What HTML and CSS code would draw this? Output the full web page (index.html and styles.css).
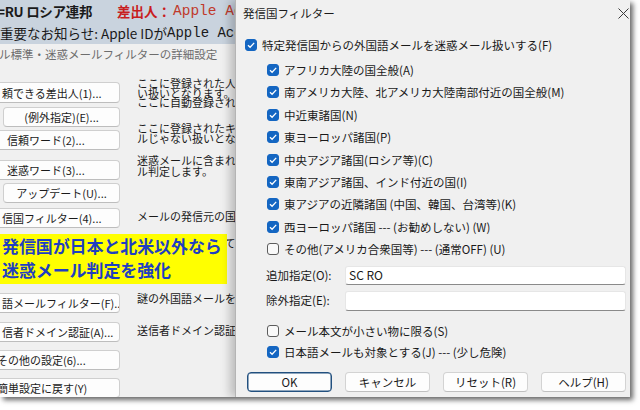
FILE: index.html
```html
<!DOCTYPE html>
<html lang="ja">
<head>
<meta charset="utf-8">
<title>発信国フィルター</title>
<link rel="stylesheet" href="styles.css">
</head>
<body>
<div class="frame">
  <div class="mainwin">
    <div class="hdr">
      <div class="hdr-row"><span class="hdr-country">=RU ロシア連邦</span><span class="hdr-from">差出人：</span><span class="mono">Apple Account</span></div>
      <div class="hdr-row hdr-row2"><span>重要なお知らせ: Apple IDが</span><span class="mono dark">Apple Account</span></div>
    </div>
    <div class="subtitle">ル標準・迷惑メールフィルターの詳細設定</div>
    <div class="settings">
      <div class="btncol">
        <button class="btn b1">頼できる差出人(1)...</button>
        <button class="btn sub b2">(例外指定)(E)...</button>
        <button class="btn pad b3">信頼ワード(2)...</button>
        <button class="btn pad b4">迷惑ワード(3)...</button>
        <button class="btn sub b5">アップデート(U)...</button>
        <button class="btn b6">信国フィルター(4)...</button>
        <button class="btn b7">語メールフィルター(F)...</button>
        <button class="btn b8">信者ドメイン認証(A)...</button>
        <button class="btn cut b9">その他の設定(6)...</button>
        <button class="btn cut b10">簡単設定に戻す(Y)</button>
      </div>
      <div class="desccol">
        <p class="desc d1">ここに登録された人からのメールは<br>い扱いとなります。ここに<br>ここに自動登録されます。</p>
        <p class="desc d2">ここに登録されたキーワードを含むメー<br>ルじゃない扱いとなります。</p>
        <p class="desc d3">迷惑メールに含まれるキーワードでメー<br>ル判定します。</p>
        <p class="desc d4">メールの発信元の国で判定します。</p>
        <p class="desc d5">発信国をもとにして判定します。</p>
        <p class="desc d6">謎の外国語メールを判定します。</p>
        <p class="desc d7">送信者ドメイン認証の結果で判定します。</p>
      </div>
    </div>
    <div class="callout">発信国が日本と北米以外なら<br>迷惑メール判定を強化</div>
  </div>

  <div class="dialog">
    <div class="titlebar">
      <span class="title">発信国フィルター</span>
      <svg class="close" width="11" height="11" viewBox="0 0 11 11"><path d="M0.5 0.5 L10.5 10.5 M10.5 0.5 L0.5 10.5" stroke="#3a3a3a" stroke-width="1" fill="none"/></svg>
    </div>
    <div class="dlg-body">
      <label class="chk main"><span class="box on"><svg width="12" height="12" viewBox="0 0 12 12"><path d="M3 6.3 L5.1 8.3 L9.2 3.9" stroke="#fff" stroke-width="1.3" fill="none"/></svg></span>特定発信国からの外国語メールを迷惑メール扱いする(F)</label>
      <div class="sublist">
        <label class="chk"><span class="box on"><svg width="12" height="12" viewBox="0 0 12 12"><path d="M3 6.3 L5.1 8.3 L9.2 3.9" stroke="#fff" stroke-width="1.3" fill="none"/></svg></span>アフリカ大陸の国全般(A)</label>
        <label class="chk"><span class="box on"><svg width="12" height="12" viewBox="0 0 12 12"><path d="M3 6.3 L5.1 8.3 L9.2 3.9" stroke="#fff" stroke-width="1.3" fill="none"/></svg></span>南アメリカ大陸、北アメリカ大陸南部付近の国全般(M)</label>
        <label class="chk"><span class="box on"><svg width="12" height="12" viewBox="0 0 12 12"><path d="M3 6.3 L5.1 8.3 L9.2 3.9" stroke="#fff" stroke-width="1.3" fill="none"/></svg></span>中近東諸国(N)</label>
        <label class="chk"><span class="box on"><svg width="12" height="12" viewBox="0 0 12 12"><path d="M3 6.3 L5.1 8.3 L9.2 3.9" stroke="#fff" stroke-width="1.3" fill="none"/></svg></span>東ヨーロッパ諸国(P)</label>
        <label class="chk"><span class="box on"><svg width="12" height="12" viewBox="0 0 12 12"><path d="M3 6.3 L5.1 8.3 L9.2 3.9" stroke="#fff" stroke-width="1.3" fill="none"/></svg></span>中央アジア諸国(ロシア等)(C)</label>
        <label class="chk"><span class="box on"><svg width="12" height="12" viewBox="0 0 12 12"><path d="M3 6.3 L5.1 8.3 L9.2 3.9" stroke="#fff" stroke-width="1.3" fill="none"/></svg></span>東南アジア諸国、インド付近の国(I)</label>
        <label class="chk"><span class="box on"><svg width="12" height="12" viewBox="0 0 12 12"><path d="M3 6.3 L5.1 8.3 L9.2 3.9" stroke="#fff" stroke-width="1.3" fill="none"/></svg></span>東アジアの近隣諸国 (中国、韓国、台湾等)(K)</label>
        <label class="chk"><span class="box on"><svg width="12" height="12" viewBox="0 0 12 12"><path d="M3 6.3 L5.1 8.3 L9.2 3.9" stroke="#fff" stroke-width="1.3" fill="none"/></svg></span>西ヨーロッパ諸国 --- (お勧めしない) (W)</label>
        <label class="chk"><span class="box"></span>その他(アメリカ合衆国等) --- (通常OFF) (U)</label>
      </div>
      <div class="fields">
        <span class="flabel">追加指定(O):</span><div class="field">SC RO</div>
        <span class="flabel">除外指定(E):</span><div class="field"></div>
      </div>
      <div class="opts">
        <label class="chk"><span class="box"></span>メール本文が小さい物に限る(S)</label>
        <label class="chk"><span class="box on"><svg width="12" height="12" viewBox="0 0 12 12"><path d="M3 6.3 L5.1 8.3 L9.2 3.9" stroke="#fff" stroke-width="1.3" fill="none"/></svg></span>日本語メールも対象とする(J) --- (少し危険)</label>
      </div>
      <div class="btnrow">
        <button class="dbtn default">OK</button>
        <button class="dbtn">キャンセル</button>
        <button class="dbtn">リセット(R)</button>
        <button class="dbtn">ヘルプ(H)</button>
      </div>
    </div>
  </div>
</div>
</body>
</html>
```

FILE: styles.css
```css
html, body {
  margin: 0;
  padding: 0;
  background: #ffffff;
}
body {
  font-family: "Noto Sans CJK JP", "Noto Sans", sans-serif;
  color: #1a1a1a;
  width: 640px;
  height: 410px;
  overflow: hidden;
}
.frame {
  width: 630px;
  height: 397px;
  display: flex;
  overflow: hidden;
  box-shadow: 3px 3px 5px rgba(0, 0, 0, 0.6);
}

/* ---------- background main window ---------- */
.mainwin {
  width: 235px;
  flex: none;
  position: relative;
  overflow: hidden;
  background: #f0f0f0;
}
.hdr {
  background: #c9d3de;
  height: 44px;
}
.hdr-row {
  height: 22px;
  line-height: 22px;
  display: flex;
  white-space: nowrap;
  font-size: 13.5px;
}
.hdr-country {
  font-weight: bold;
  width: 120px;
  margin-left: -3px;
  flex: none;
  letter-spacing: -0.3px;
}
.hdr-from {
  font-weight: bold;
  color: #c81e1e;
  width: 56px;
  flex: none;
}
.mono {
  font-family: "Liberation Mono", monospace;
  font-size: 14.5px;
  color: #c0392b;
}
.mono.dark {
  color: #1a1a1a;
  font-size: 14px;
}
.hdr-row2 {
  font-size: 13.5px;
}
.subtitle {
  height: 20px;
  line-height: 20px;
  font-size: 11.5px;
  color: #6d6d6d;
  white-space: nowrap;
  margin-left: -1px;
}
.settings {
  display: flex;
}
.btncol {
  width: 137px;
  flex: none;
  display: flex;
  flex-direction: column;
  align-items: flex-start;
}
.btn {
  font: inherit;
  font-size: 11px;
  color: #1a1a1a;
  height: 20px;
  line-height: 18px;
  padding: 0 0 0 9px;
  margin: 0 0 0 -8px;
  width: 128px;
  text-align: left;
  white-space: nowrap;
  overflow: hidden;
  background: #fdfdfd;
  border: 1px solid #cfcfcf;
  border-bottom-color: #bdbdbd;
  border-radius: 4px;
}
.btn.pad { padding-left: 14px; }
.btn.cut { padding-left: 4px; }
.btn.sub {
  margin-left: 3px;
  width: 117px;
  padding: 0;
  text-align: center;
}
.b1 { margin-top: 18px; height: 21px; }
.b2 { margin-top: 4px; }
.b3 { margin-top: 3px; }
.b4 { margin-top: 10px; }
.b5 { margin-top: 3px; }
.b6 { margin-top: 5px; }
.b7 { margin-top: 65px; }
.b8 { margin-top: 9px; }
.b9 { margin-top: 8px; }
.b10 { margin-top: 8px; }

.desccol {
  flex: 1;
  min-width: 0;
  white-space: nowrap;
  overflow: hidden;
}
.desc {
  margin: 0;
  font-size: 11px;
  line-height: 9.5px;
  color: #1a1a1a;
}
.d1 { margin-top: 15px; }
.d2 { margin-top: 16.5px; }
.d3 { margin-top: 12px; line-height: 11px; }
.d4 { margin-top: 34px; line-height: 11px; }
.d5 { margin-top: 16px; line-height: 11px; }
.d6 { margin-top: 44px; line-height: 11px; }
.d7 { margin-top: 21px; line-height: 11px; }

.callout {
  position: absolute;
  left: 0;
  top: 234px;
  width: 227px;
  height: 50px;
  background: #ffff00;
  color: #1f3fc0;
  font-weight: bold;
  font-size: 17px;
  line-height: 24px;
  white-space: nowrap;
  padding-left: 2px;
  box-sizing: border-box;
  letter-spacing: -0.1px;
}

/* ---------- dialog ---------- */
.dialog {
  flex: 1;
  position: relative;
  z-index: 1;
  background: #f0f0f0;
  border-left: 1px solid #b4b4b4;
  box-shadow: -5px 0 9px rgba(0, 0, 0, 0.22);
  display: flex;
  flex-direction: column;
  font-size: 11.5px;
}
.titlebar {
  height: 26px;
  display: flex;
  align-items: center;
  justify-content: space-between;
  padding: 0 2px 0 7px;
  flex: none;
}
.title {
  font-size: 11.5px;
  line-height: 26px;
}
.close {
  display: block;
  margin-top: 1px;
}
.dlg-body {
  padding: 0 5px 0 9px;
  display: flex;
  flex-direction: column;
}
.chk {
  display: flex;
  align-items: center;
  gap: 5px;
  white-space: nowrap;
  height: 22.4px;
}
.chk.main {
  margin-top: 9px;
  height: 20px;
}
.box {
  width: 12px;
  height: 12px;
  flex: none;
  box-sizing: border-box;
  border: 1px solid #5c5c5c;
  border-radius: 3px;
  background: #f9f9f9;
  display: flex;
}
.box.on {
  background: #1466c2;
  border-color: #1466c2;
}
.box svg {
  margin: -1px;
  display: block;
}
.sublist {
  margin-top: 3.8px;
  padding-left: 22px;
  display: flex;
  flex-direction: column;
}
.fields {
  margin-top: 5.6px;
  padding-left: 21px;
  display: grid;
  grid-template-columns: 79px 1fr;
  grid-template-rows: 19px 20px;
  row-gap: 6px;
  align-items: center;
}
.flabel {
  white-space: nowrap;
  line-height: 19px;
}
.field {
  height: 100%;
  box-sizing: border-box;
  background: #ffffff;
  border: 1px solid #e6e6e6;
  border-bottom: 1px solid #8a8a8a;
  border-radius: 3px;
  padding-left: 3px;
  font-size: 12px;
  line-height: 16px;
}
.opts {
  margin-top: 9.5px;
  padding-left: 22px;
  display: flex;
  flex-direction: column;
}
.opts .chk {
  height: 21px;
}
.btnrow {
  margin-top: 9.5px;
  margin-left: 2px;
  display: flex;
  gap: 13px;
}
.dbtn {
  font: inherit;
  font-size: 11.5px;
  color: #1a1a1a;
  width: 85px;
  height: 20px;
  line-height: 18px;
  padding: 0;
  margin: 0;
  background: #fdfdfd;
  border: 1px solid #d3d3d3;
  border-bottom-color: #c0c0c0;
  border-radius: 4px;
}
.dbtn.default {
  border: 1px solid #22507f;
  box-shadow: inset 0 0 0 0.5px #22507f;
}
```
